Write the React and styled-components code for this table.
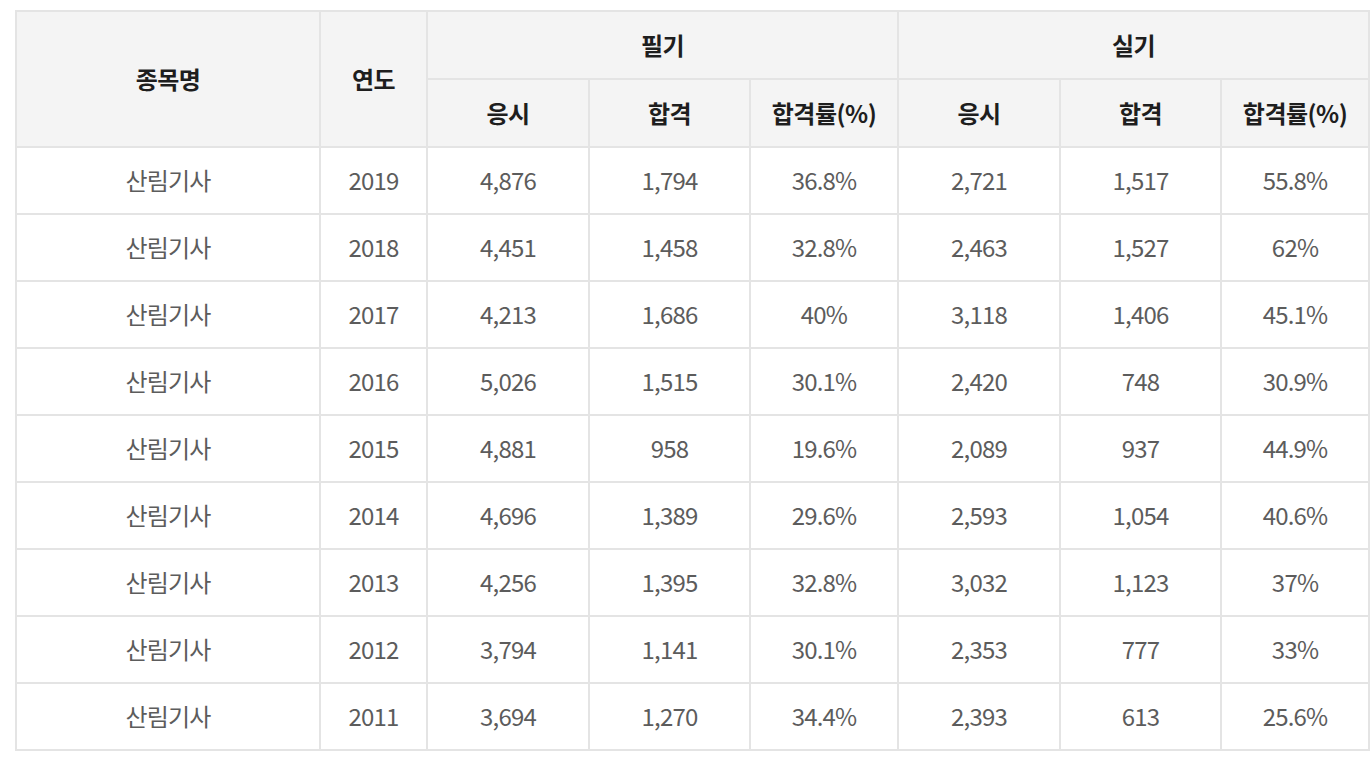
import React from "react";
import styled, { createGlobalStyle } from "styled-components";

const GlobalStyle = createGlobalStyle`
    body {
        margin: 0;
        background: #ffffff;
        font-family: "Noto Sans CJK KR", "Noto Sans", sans-serif;
    }
`;

const Wrapper = styled.div`
    padding: 10px 4px 0 15px;
`;

const Table = styled.table`
    width: 1353px;
    border-collapse: collapse;
    table-layout: fixed;
    border: 2px solid #e4e4e4;
`;

const HeadCell = styled.th`
    height: 66px;
    padding: 0;
    background: #f4f4f4;
    border: 2px solid #e4e4e4;
    color: #1e1e1e;
    font-size: 24px;
    line-height: 1.2;
    font-weight: 700;
    text-align: center;
    letter-spacing: -0.5px;
`;

const Cell = styled.td`
    height: 65px;
    padding: 0;
    border: 2px solid #e4e4e4;
    color: #5c5c5c;
    font-size: 24px;
    line-height: 1.2;
    font-weight: 400;
    text-align: center;
    letter-spacing: -0.8px;
`;

const widths = [304, 107, 162, 161, 148, 162, 161, 148];

const rows = [
    ["2019", "4,876", "1,794", "36.8%", "2,721", "1,517", "55.8%"],
    ["2018", "4,451", "1,458", "32.8%", "2,463", "1,527", "62%"],
    ["2017", "4,213", "1,686", "40%", "3,118", "1,406", "45.1%"],
    ["2016", "5,026", "1,515", "30.1%", "2,420", "748", "30.9%"],
    ["2015", "4,881", "958", "19.6%", "2,089", "937", "44.9%"],
    ["2014", "4,696", "1,389", "29.6%", "2,593", "1,054", "40.6%"],
    ["2013", "4,256", "1,395", "32.8%", "3,032", "1,123", "37%"],
    ["2012", "3,794", "1,141", "30.1%", "2,353", "777", "33%"],
    ["2011", "3,694", "1,270", "34.4%", "2,393", "613", "25.6%"],
];

const App = () => (
    <>
        <GlobalStyle />
        <Wrapper>
            <Table>
                <colgroup>
                    {widths.map((w, i) => (
                        <col key={i} style={{ width: w }} />
                    ))}
                </colgroup>
                <thead>
                    <tr>
                        <HeadCell rowSpan={2}>종목명</HeadCell>
                        <HeadCell rowSpan={2}>연도</HeadCell>
                        <HeadCell colSpan={3}>필기</HeadCell>
                        <HeadCell colSpan={3}>실기</HeadCell>
                    </tr>
                    <tr>
                        <HeadCell>응시</HeadCell>
                        <HeadCell>합격</HeadCell>
                        <HeadCell>합격률(%)</HeadCell>
                        <HeadCell>응시</HeadCell>
                        <HeadCell>합격</HeadCell>
                        <HeadCell>합격률(%)</HeadCell>
                    </tr>
                </thead>
                <tbody>
                    {rows.map((r) => (
                        <tr key={r[0]}>
                            <Cell>산림기사</Cell>
                            {r.map((v, i) => (
                                <Cell key={i}>{v}</Cell>
                            ))}
                        </tr>
                    ))}
                </tbody>
            </Table>
        </Wrapper>
    </>
);

export default App;
